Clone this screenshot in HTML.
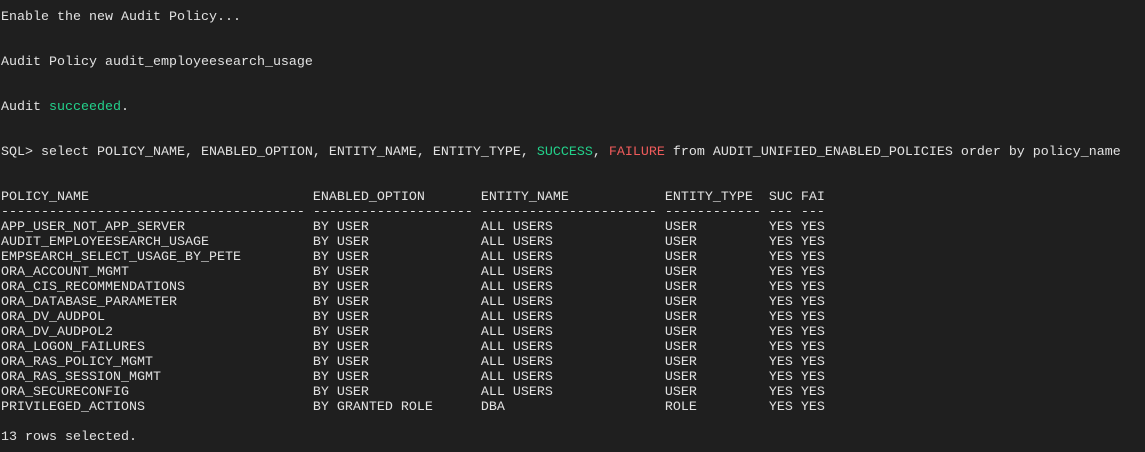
<!DOCTYPE html>
<html><head><meta charset="utf-8"><style>
html,body{margin:0;padding:0;background:#1f1f1f;width:1145px;height:452px;overflow:hidden}
pre{margin:0;padding:10px 0 0 1px;font-family:"Liberation Mono",monospace;font-size:13.33px;line-height:15px;color:#e2e2e2}
.g{color:#23d18b}.r{color:#ef5b5b}
</style></head><body><pre>Enable the new Audit Policy...


Audit Policy audit_employeesearch_usage


Audit <span class="g">succeeded</span>.


SQL&gt; select POLICY_NAME, ENABLED_OPTION, ENTITY_NAME, ENTITY_TYPE, <span class="g">SUCCESS</span>, <span class="r">FAILURE</span> from AUDIT_UNIFIED_ENABLED_POLICIES order by policy_name


POLICY_NAME                            ENABLED_OPTION       ENTITY_NAME            ENTITY_TYPE  SUC FAI
-------------------------------------- -------------------- ---------------------- ------------ --- ---
APP_USER_NOT_APP_SERVER                BY USER              ALL USERS              USER         YES YES
AUDIT_EMPLOYEESEARCH_USAGE             BY USER              ALL USERS              USER         YES YES
EMPSEARCH_SELECT_USAGE_BY_PETE         BY USER              ALL USERS              USER         YES YES
ORA_ACCOUNT_MGMT                       BY USER              ALL USERS              USER         YES YES
ORA_CIS_RECOMMENDATIONS                BY USER              ALL USERS              USER         YES YES
ORA_DATABASE_PARAMETER                 BY USER              ALL USERS              USER         YES YES
ORA_DV_AUDPOL                          BY USER              ALL USERS              USER         YES YES
ORA_DV_AUDPOL2                         BY USER              ALL USERS              USER         YES YES
ORA_LOGON_FAILURES                     BY USER              ALL USERS              USER         YES YES
ORA_RAS_POLICY_MGMT                    BY USER              ALL USERS              USER         YES YES
ORA_RAS_SESSION_MGMT                   BY USER              ALL USERS              USER         YES YES
ORA_SECURECONFIG                       BY USER              ALL USERS              USER         YES YES
PRIVILEGED_ACTIONS                     BY GRANTED ROLE      DBA                    ROLE         YES YES

13 rows selected.
</pre></body></html>
